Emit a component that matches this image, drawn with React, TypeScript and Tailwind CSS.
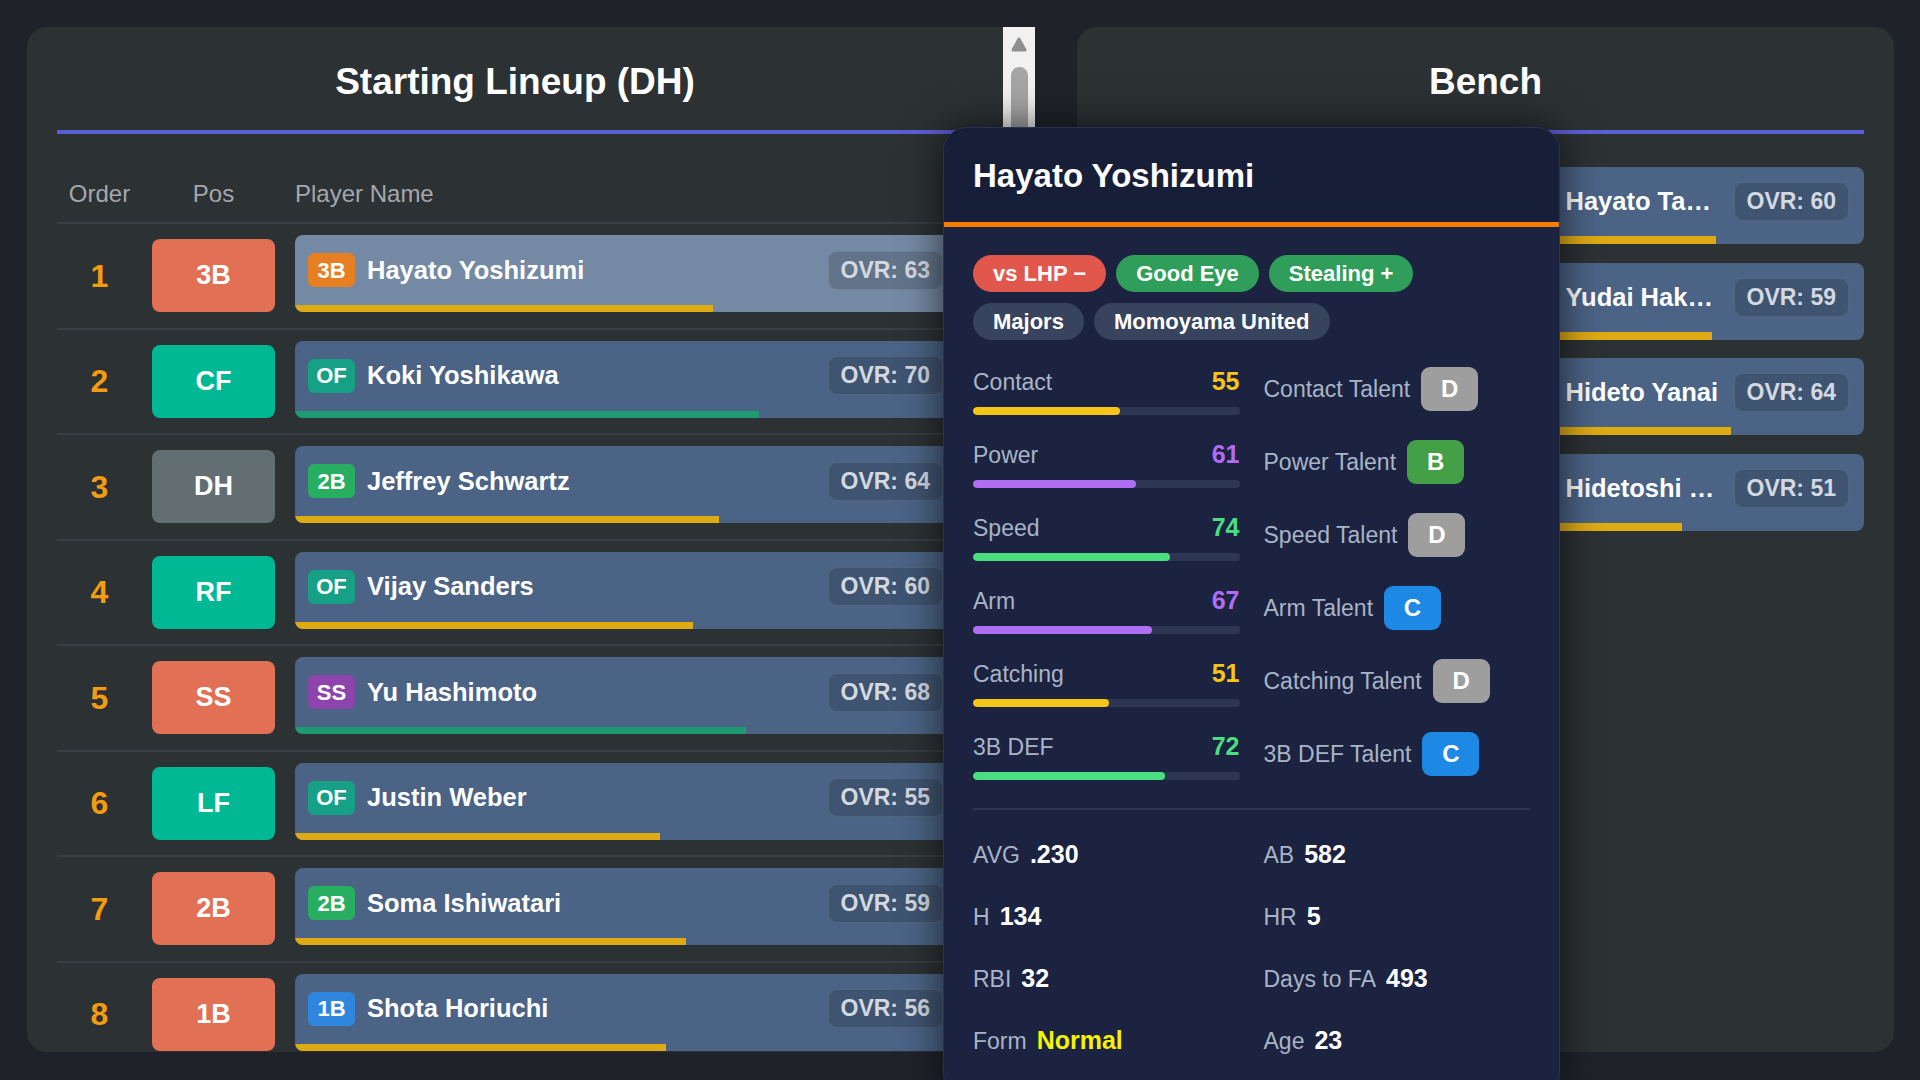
import React from 'react';

type Player = { pos: string; tag: string; name: string; ovr: number; active?: boolean };

const LINEUP: Player[] = [
  { pos: '3B', tag: '3B', name: 'Hayato Yoshizumi', ovr: 63, active: true },
  { pos: 'CF', tag: 'OF', name: 'Koki Yoshikawa', ovr: 70 },
  { pos: 'DH', tag: '2B', name: 'Jeffrey Schwartz', ovr: 64 },
  { pos: 'RF', tag: 'OF', name: 'Vijay Sanders', ovr: 60 },
  { pos: 'SS', tag: 'SS', name: 'Yu Hashimoto', ovr: 68 },
  { pos: 'LF', tag: 'OF', name: 'Justin Weber', ovr: 55 },
  { pos: '2B', tag: '2B', name: 'Soma Ishiwatari', ovr: 59 },
  { pos: '1B', tag: '1B', name: 'Shota Horiuchi', ovr: 56 },
  { pos: 'C', tag: 'C', name: 'Ryo Matsumura', ovr: 58 },
];

const BENCH: Player[] = [
  { pos: 'C', tag: 'C', name: 'Daiki Ogawa', ovr: 52 },
  { pos: '3B', tag: '3B', name: 'Hayato Tanaka', ovr: 60 },
  { pos: 'SS', tag: 'SS', name: 'Kenta Mori', ovr: 54 },
  { pos: 'OF', tag: 'OF', name: 'Yudai Hakamada', ovr: 59 },
  { pos: '1B', tag: '1B', name: 'Takumi Sato', ovr: 50 },
  { pos: 'OF', tag: 'OF', name: 'Hideto Yanai', ovr: 64 },
  { pos: '2B', tag: '2B', name: 'Sho Kimura', ovr: 48 },
  { pos: '1B', tag: '1B', name: 'Hidetoshi Kubota', ovr: 51 },
];

const POS_BOX: Record<string, string> = {
  '3B': 'bg-[#e17055]',
  SS: 'bg-[#e17055]',
  '2B': 'bg-[#e17055]',
  '1B': 'bg-[#e17055]',
  C: 'bg-[#e17055]',
  CF: 'bg-[#00b894]',
  RF: 'bg-[#00b894]',
  LF: 'bg-[#00b894]',
  DH: 'bg-[#636e72]',
};

const TAG: Record<string, string> = {
  '3B': 'bg-[#e67e22]',
  OF: 'bg-[#16a085]',
  '2B': 'bg-[#27ae60]',
  SS: 'bg-[#8e44ad]',
  '1B': 'bg-[#2e86de]',
  C: 'bg-[#c0392b]',
};

const STATS = [
  { label: 'Contact', value: 55, grade: 'D' },
  { label: 'Power', value: 61, grade: 'B' },
  { label: 'Speed', value: 74, grade: 'D' },
  { label: 'Arm', value: 67, grade: 'C' },
  { label: 'Catching', value: 51, grade: 'D' },
  { label: '3B DEF', value: 72, grade: 'C' },
];

const GRADE: Record<string, string> = {
  B: 'bg-[#43a047]',
  C: 'bg-[#1e88e5]',
  D: 'bg-[#9e9e9e]',
};

const RECORD = [
  { label: 'AVG', value: '.230' },
  { label: 'AB', value: '582' },
  { label: 'H', value: '134' },
  { label: 'HR', value: '5' },
  { label: 'RBI', value: '32' },
  { label: 'Days to FA', value: '493' },
  { label: 'Form', value: 'Normal', hot: true },
  { label: 'Age', value: '23' },
];

const statText = (v: number) => (v >= 70 ? 'text-[#4ade80]' : v >= 60 ? 'text-[#b36cf5]' : 'text-[#f5c518]');
const statFill = (v: number) => (v >= 70 ? 'bg-[#4ade80]' : v >= 60 ? 'bg-[#b06ef3]' : 'bg-[#f5c518]');

const PlayerCard: React.FC<{ p: Player; barH: string }> = ({ p, barH }) => (
  <div className={`h-[77px] rounded-[8px] overflow-hidden flex flex-col ${p.active ? 'bg-[#7489a3]' : 'bg-[#4b6385]'}`}>
    <div className="flex-1 flex items-center pl-[13px] pr-[15px] min-w-0">
      <span className={`w-[47px] h-[34px] shrink-0 rounded-[6px] flex items-center justify-center text-[22px] font-bold text-white ${TAG[p.tag]}`}>
        {p.tag}
      </span>
      <span className="ml-[12px] flex-1 min-w-0 truncate text-[25.5px] font-bold text-white">{p.name}</span>
      <span className="ml-[11px] shrink-0 h-[39px] px-[12px] rounded-[9px] bg-black/15 border border-white/10 flex items-center text-[23px] font-bold text-[#d3d9e0]">
        OVR: {p.ovr}
      </span>
    </div>
    <div className={`${barH} ${p.ovr >= 65 ? 'bg-[#1e9b72]' : 'bg-[#deab14]'}`} style={{ width: `${p.ovr}%` }} />
  </div>
);

const PanelTitle: React.FC<{ text: string }> = ({ text }) => (
  <div className="pt-[31px] pb-[24px] border-b-4 border-[#5b5fd4] text-center">
    <h2 className="text-[37px] leading-[48px] font-bold text-white">{text}</h2>
  </div>
);

const App: React.FC = () => {
  return (
    <div className="relative w-[1920px] h-[1080px] overflow-hidden bg-[#1f2329] font-['Liberation_Sans',Arial,sans-serif] flex gap-[42px] pl-[27px] pt-[27px] pb-[28px]">
      {/* lineup */}
      <div className="w-[1008px] h-full flex">
        <div className="flex-1 min-w-0 bg-[#2c3134] rounded-l-[20px] overflow-hidden px-[30px]">
          <PanelTitle text="Starting Lineup (DH)" />
          <div className="mt-[42px] h-[48px] pb-[18px] grid grid-cols-[85px_143px_1fr] items-center border-b-2 border-[#393e42] text-[24px] text-[#a4a8ac]">
            <span className="text-center">Order</span>
            <span className="text-center">Pos</span>
            <span className="pl-[10px]">Player Name</span>
          </div>
          {LINEUP.map((p, i) => (
            <div key={p.name} className="grid grid-cols-[85px_143px_1fr] items-start pt-[11px] pb-[15.5px] border-b-2 border-[#393e42]">
              <div className="mt-[4px] h-[73px] flex items-center justify-center text-[32px] font-bold text-[#f39c12]">{i + 1}</div>
              <div className={`mt-[4px] mx-auto w-[123px] h-[73px] rounded-[8px] flex items-center justify-center text-[27px] font-bold text-white ${POS_BOX[p.pos]}`}>
                {p.pos}
              </div>
              <div className="pl-[10px] pr-[15px]">
                <PlayerCard p={p} barH="h-[7px]" />
              </div>
            </div>
          ))}
        </div>
        <div className="w-[32px] shrink-0 bg-[#f1f1f1] flex flex-col items-center">
          <svg className="mt-[10px]" width="16" height="15" viewBox="0 0 16 15">
            <polygon points="8,2 14,13 2,13" fill="#8f8f8f" stroke="#8f8f8f" strokeWidth="3" strokeLinejoin="round" />
          </svg>
          <div className="mt-[15px] w-[17px] h-[620px] rounded-full bg-[#a5a5a5]" />
        </div>
      </div>

      {/* bench */}
      <div className="w-[817px] h-full bg-[#2c3134] rounded-[20px] px-[30px]">
        <PanelTitle text="Bench" />
        <div className="mt-[33px] grid grid-cols-2 gap-x-[16px] gap-y-[18.5px]">
          {BENCH.map((p) => (
            <PlayerCard key={p.name} p={p} barH="h-[8px]" />
          ))}
        </div>
      </div>

      {/* hover card */}
      <div className="absolute left-[943px] top-[127px] w-[617px] rounded-[24px] bg-[#1b2341] border border-[#283256] shadow-[0_0_40px_rgba(0,0,0,0.65)] overflow-hidden">
        <div className="bg-[#171e37] px-[29px] pt-[28px] pb-[26px]">
          <h3 className="text-[33px] leading-[40px] font-bold text-white">Hayato Yoshizumi</h3>
        </div>
        <div className="h-[5px] bg-[#f57c00]" />
        <div className="px-[29px] pt-[28px] pb-[40px]">
          <div className="flex flex-col gap-[11px]">
            <div className="flex gap-[10px]">
              <span className="px-[20px] py-[6px] leading-[25px] rounded-full bg-[#e2574c] text-[22px] font-bold text-white">vs LHP −</span>
              <span className="px-[20px] py-[6px] leading-[25px] rounded-full bg-[#2f9e5a] text-[22px] font-bold text-white">Good Eye</span>
              <span className="px-[20px] py-[6px] leading-[25px] rounded-full bg-[#2f9e5a] text-[22px] font-bold text-white">Stealing +</span>
            </div>
            <div className="flex gap-[10px]">
              <span className="px-[20px] py-[6px] leading-[25px] rounded-full bg-[#38435e] text-[22px] font-bold text-white">Majors</span>
              <span className="px-[20px] py-[6px] leading-[25px] rounded-full bg-[#38435e] text-[22px] font-bold text-white">Momoyama United</span>
            </div>
          </div>

          <div className="mt-[27px] grid grid-cols-2 gap-x-[24px] gap-y-[25px]">
            {STATS.map((s) => (
              <React.Fragment key={s.label}>
                <div className="flex flex-col">
                  <div className="h-[30px] flex items-center justify-between">
                    <span className="text-[23px] text-[#a9b4c6]">{s.label}</span>
                    <span className={`text-[25px] font-bold ${statText(s.value)}`}>{s.value}</span>
                  </div>
                  <div className="mt-[10px] h-[8px] rounded-full bg-[#2d3653] overflow-hidden">
                    <div className={`h-full rounded-full ${statFill(s.value)}`} style={{ width: `${s.value}%` }} />
                  </div>
                </div>
                <div className="self-start h-[44px] flex items-center gap-[11px]">
                  <span className="text-[23px] text-[#a9b4c6]">{s.label} Talent</span>
                  <span className={`w-[57px] h-[44px] rounded-[9px] flex items-center justify-center text-[24px] font-bold text-white ${GRADE[s.grade]}`}>
                    {s.grade}
                  </span>
                </div>
              </React.Fragment>
            ))}
          </div>

          <div className="mt-[28px] h-[2px] bg-[#2b3652]" />

          <div className="mt-[30px] grid grid-cols-2 gap-x-[24px] gap-y-[32px]">
            {RECORD.map((r) => (
              <div key={r.label} className="h-[30px] flex items-center gap-[10px]">
                <span className="text-[23px] text-[#a9b4c6]">{r.label}</span>
                <span className={`text-[25px] font-bold ${r.hot ? 'text-[#f5f20a]' : 'text-white'}`}>{r.value}</span>
              </div>
            ))}
          </div>
        </div>
      </div>
    </div>
  );
};

export default App;
